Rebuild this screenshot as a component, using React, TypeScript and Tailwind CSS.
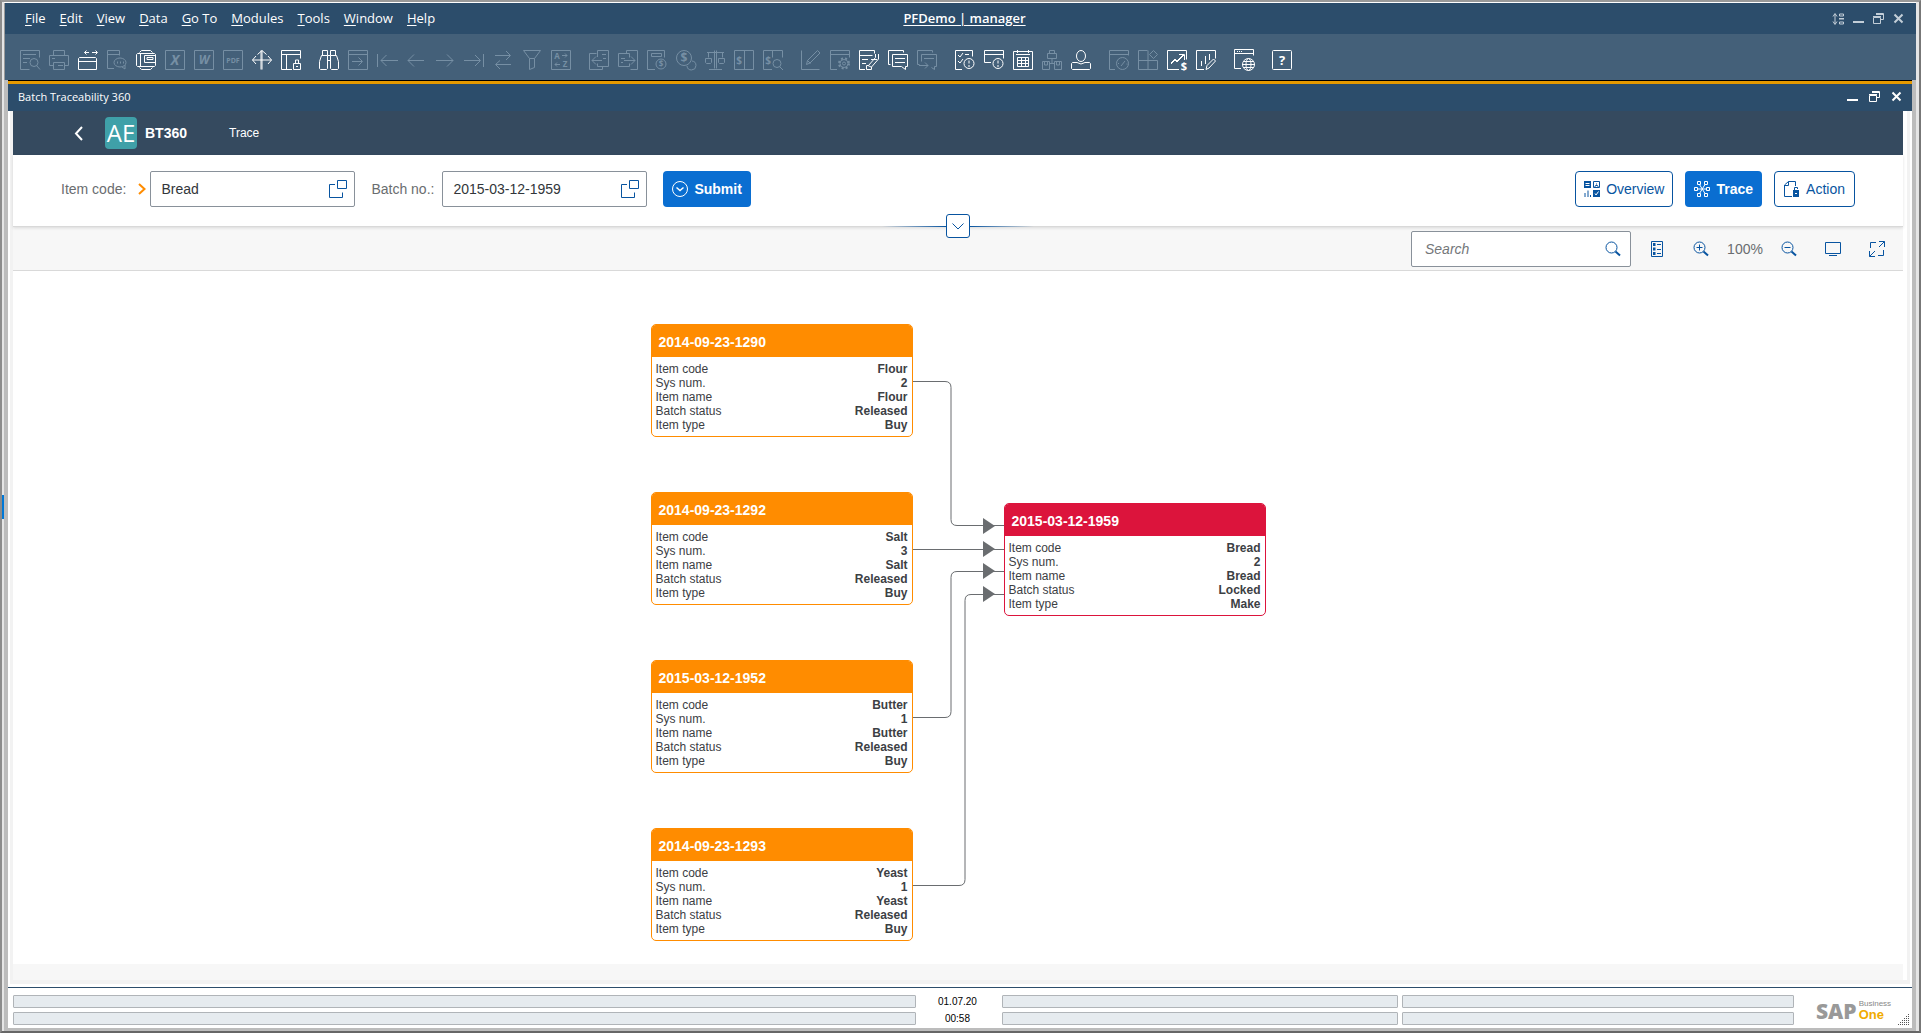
import { useState, type ReactNode } from "react";

const MENU = ["File", "Edit", "View", "Data", "Go To", "Modules", "Tools", "Window", "Help"];

const FIELDS = ["Item code", "Sys num.", "Item name", "Batch status", "Item type"];

type Batch = {
  id: string;
  values: string[];
  locked?: boolean;
  place: string;
};

const BATCHES: Batch[] = [
  { id: "2014-09-23-1290", values: ["Flour", "2", "Flour", "Released", "Buy"], place: "left-0 top-0" },
  { id: "2014-09-23-1292", values: ["Salt", "3", "Salt", "Released", "Buy"], place: "left-0 top-[168px]" },
  { id: "2015-03-12-1952", values: ["Butter", "1", "Butter", "Released", "Buy"], place: "left-0 top-[336px]" },
  { id: "2014-09-23-1293", values: ["Yeast", "1", "Yeast", "Released", "Buy"], place: "left-0 top-[504px]" },
  {
    id: "2015-03-12-1959",
    values: ["Bread", "2", "Bread", "Locked", "Make"],
    locked: true,
    place: "left-[353px] top-[179px]",
  },
];

type Tool = { label: string; on?: boolean; d?: string; extra?: ReactNode };

const glyph = (x: number, y: number, size: number, text: string, italic = false) => (
  <text
    x={x}
    y={y}
    fontSize={size}
    fontWeight="bold"
    fontStyle={italic ? "italic" : undefined}
    textAnchor="middle"
    fill="currentColor"
    stroke="none"
  >
    {text}
  </text>
);

const BOX = "M.5 .5h19v19H.5z";

const TOOL_GROUPS: Tool[][] = [
  [
    {
      label: "Preview",
      d: "M9.500 19.500H.5V.5h19v7M3 4.500h13M3 8.500h7M3 12.500h4M17 16l3 3.500",
      extra: <circle cx="14" cy="12.500" r="4" />,
    },
    { label: "Print", d: "M4.500 5.500v-5h11v5M4 15.500H.5v-10h19v10H16M4.500 12.500h11v7h-11zM3 8.500h3M9 15.500h5" },
    {
      label: "Window size",
      on: true,
      d: "M1.500 7.500h16l1 1v11H.5v-11zM.5 11.500h18M6.500 2.500H11M8.500 .5l-2 2 2 2M14 2.500h5M17.500 .5l2 2-2 2",
    },
    {
      label: "Messages",
      d: "M7 18.500H.5V.5h12v5M.5 4.500h12M15 17l3 2v-4",
      extra: (
        <>
          <ellipse cx="13" cy="12.500" rx="6" ry="4.500" />
          <path d="M10 12.500h1M13 12.500h1M16 12.500h1" strokeWidth="2" />
        </>
      ),
    },
    {
      label: "Fax",
      on: true,
      d: "M3.500 2.500l2-2h9l2 2M3.500 17.500l2 2h9l2-2M1.500 3.500h17l1 1v11l-1 1h-17l-1-1v-11zM4.500 3.500v13M8.500 5.500h11v7h-11zM11 7.500h6v2h-6z",
    },
    { label: "Export to Excel", d: BOX, extra: glyph(10, 15, 14, "X", true) },
    { label: "Export to Word", d: BOX, extra: glyph(10, 14, 12, "W", true) },
    { label: "Export to PDF", d: BOX, extra: glyph(10, 13, 7, "PDF") },
    {
      label: "Move",
      on: true,
      d: "M10 .5v19M.5 10h19M5.500 4.500L10 .5l4.500 4M4 6L.5 10 4 14M16 6l3.500 4-3.500 4M9 .5v19",
    },
    {
      label: "Lock layout",
      on: true,
      d: "M11 19.500H.5V.5h19v8M.5 4.500h19M5.500 4.500v15M12.500 13.500h7v6h-7zM14.500 13v-3h3v3M15 16.500h2",
    },
  ],
  [
    {
      label: "Find",
      on: true,
      d: "M3.500 5.500v-5h5v5M11.500 5.500v-5h5v5M8.500 5.500h3M2.500 5.500h6v13l-1 1h-6l-1-1v-7zM17.500 5.500h-6v13l1 1h6l1-1v-7zM8.500 10.500h3",
    },
    { label: "Add", d: "M.5 .5h19v19H.5zM.5 4.500h19M4 11.500h10M10.500 7.500l4 4-4 4" },
    { label: "First record", d: "M.5 4v13M4 10.500h17M9.500 5L4 10.500 9.500 16" },
    { label: "Previous record", d: "M2 10.500h16M8 4.500l-6 6 6 6" },
    { label: "Next record", d: "M1 10.500h17M12 4.500l6 6-6 6" },
    { label: "Last record", d: "M0 10.500h16M11 5l5.500 5.500L11 16M19.500 4v13" },
    { label: "Refresh", d: "M2 5.500h15M13 1l4.500 4.500L13 10M18 14.500H3M7 10.500l-4.500 4L7 19" },
    { label: "Filter", d: "M1.500 .5h17L12.500 8.500v9l-5 2v-11zM7.500 8.500h5" },
    {
      label: "Sort",
      d: "M.5 .5h19v19H.5zM11 5.500h5M14 3.500l2 2-2 2M9 14.500H4M6 12.500l-2 2 2 2",
      extra: (
        <>
          {glyph(6, 9, 8, "A")}
          {glyph(14, 17, 8, "Z")}
        </>
      ),
    },
  ],
  [
    { label: "Base document", d: "M7.500 3.500h-7v16h13v-3M8.500 .5h11v16h-11v-3M8.500 7V.5M13 4.500h4M14 8.500h3M3 10.500h10M7 6.500l-4 4 4 4" },
    { label: "Target document", d: "M8.500 3.500V.5h11v19h-7M.5 3.500h11v4M.5 3.500v13h11v-3M3 8.500h4M3 12.500h2M6 10.500h11M13 6.500l4 4-4 4" },
    {
      label: "Gross profit",
      d: "M8 19.500H.5V.5h17v7M4.500 3.500h10v3h-10z",
      extra: (
        <>
          <circle cx="14" cy="14" r="5" />
          {glyph(14, 17, 8, "$")}
        </>
      ),
    },
    {
      label: "Payment means",
      extra: (
        <>
          <circle cx="8" cy="8" r="7.500" />
          {glyph(8, 12, 12, "$")}
          <path d="M11 16a4.500 4.500 0 1 0 5-5" />
        </>
      ),
    },
    { label: "Volume and weight", d: "M9.500 .5v18M11.500 .5v18M4 19.500h13M2 2.500h17M3.500 2.500v5M17.500 2.500v5M.5 8.500h6v4l-1 1h-4l-1-1zM13.500 8.500h6v4l-1 1h-4l-1-1z" },
    { label: "Journal", d: "M.5 .5h19v19H.5zM10.500 .5v19", extra: glyph(5, 14, 10, "$") },
    {
      label: "Journal preview",
      d: "M9 19.500H.5V.5h19v7M9.500 .5v7M17 17l3 3",
      extra: (
        <>
          {glyph(5, 14, 10, "$")}
          <circle cx="14" cy="13.500" r="4" />
        </>
      ),
    },
  ],
  [
    { label: "Edit", d: "M.5 .5v19h18M5.500 14.500l1-4 10-10 2.500 2.500-10 10zM6.500 10.500l3 3" },
    {
      label: "Form settings",
      d: "M7 19.500H.5V.5h19v7M.5 4.500h19",
      extra: (
        <>
          <circle cx="14" cy="13.500" r="5" strokeWidth="2" strokeDasharray="2 2" />
          <circle cx="14" cy="13.500" r="4" />
          <circle cx="14" cy="13.500" r="1.500" />
        </>
      ),
    },
    {
      label: "Layout designer",
      on: true,
      d: "M6 19.500H.5V.5h15v3M.5 5.500h13M3 9.500h6M3 13.500h4M19.500 4v5l-7 8v2.500h-5v-4h2l7-8V4M12 9.500h6M9 15.500l4 2",
    },
    { label: "Comments", on: true, d: "M2.500 14.500h-2V.5h15v2M4.500 4.500h15v12h-2v3l-4-3h-9zM7 8.500h10M7 12.500h10" },
    { label: "Forward message", d: "M2.500 14.500h-2V.5h15v2M4.500 11.500v-7h15v12h-2v3l-3-2M7 8.500h10M2 15.500h9M8 12.500l3 3-3 3" },
  ],
  [
    {
      label: "Checklist alerts",
      on: true,
      d: "M7 19.500H.5V.5h17v6M3 5l2 2 3-4M3 11l2 2 3-4M10 4.500h4M14 10.500v3M14 15v2",
      extra: <circle cx="14" cy="13.500" r="5" />,
    },
    {
      label: "Window alerts",
      on: true,
      d: "M7 12.500H.5V.5h19v8M.5 4.500h19M14 10.500v3M14 15v2",
      extra: <circle cx="14" cy="13.500" r="5" />,
    },
    {
      label: "Calendar",
      on: true,
      d: "M.5 1.500h19v18H.5zM3 4.500h14M4.500 0v3M15.500 0v3M4.500 7.500h11v9h-11zM4.500 10.500h11M4.500 13.500h11M8.500 7v10M12.500 7v10",
    },
    { label: "Relationship map", d: "M5.500 8.500v-5h9v5h-9M7.500 3.500v-3h5v3M.5 11.500h7v8h-7zM12.500 11.500h7v8h-7zM10 8.500v5h2M10 13.500H8M2.500 11v4h3v-4M14.500 11v4h3v-4" },
    {
      label: "Approvals",
      on: true,
      d: "M6 12.500H1.500l-1 1v5l1 1h17l1-1v-5l-1-1H14q-4 3-8 0",
      extra: <ellipse cx="10" cy="6" rx="4.500" ry="5.500" />,
    },
  ],
  [
    {
      label: "Dashboard",
      d: "M6 19.500H.5V.5h19v5M.5 4.500h19M12 16l4-5M9 13.500h1M17.500 14h1",
      extra: <circle cx="13.500" cy="13.500" r="6" />,
    },
    { label: "Widgets", d: "M9.500 .5h-9v19h19v-9H.5M10 .5v19M15.500 .5l4 4-4 4-4-4z" },
    {
      label: "Sales forecast",
      on: true,
      d: "M12 19.500H.5V.5h19v9M4 14l4-4 2 2 7-7M12 4.500h5.500V10M4 13l4-4 2 2 6-6",
      extra: glyph(17, 20, 11, "$"),
    },
    { label: "Report editor", on: true, d: "M8 19.500H.5V.5h19v8M5.500 11v5M9.500 6v8M13.500 4v6M10 19.500l1-4 6.500-6.500 2 2-6.500 7z" },
  ],
  [
    {
      label: "Web client",
      on: true,
      d: "M7 18.500H.5V-.5h19v6M.5 3.500h19M3 1.500h1M5 1.500h1M7 1.500h1M8 14.500h13M9.500 11.500h10M9.500 17.500h10",
      extra: (
        <>
          <circle cx="14.500" cy="14.500" r="6" />
          <ellipse cx="14.500" cy="14.500" rx="2.500" ry="6" />
        </>
      ),
    },
  ],
  [{ label: "Help", on: true, extra: <><rect x=".5" y=".5" width="19" height="19" rx="1" />{glyph(10, 15, 13, "?")}</> }],
];

function Icon({ d, size = 16, children }: { d?: string; size?: number; children?: ReactNode }) {
  return (
    <svg
      width={size}
      height={size}
      viewBox={`0 0 ${size} ${size}`}
      fill="none"
      stroke="currentColor"
      className="shrink-0 overflow-visible"
      aria-hidden="true"
    >
      {d && <path d={d} />}
      {children}
    </svg>
  );
}

function WindowButtons() {
  return (
    <>
      <button aria-label="Minimize">
        <Icon size={11} d="M0 9.500h11M0 8.500h11" />
      </button>
      <button aria-label="Restore">
        <Icon size={11} d="M.5 4.500h7v6h-7zM0 3.500h8M3 1.500h8M3 .5h7.500v6H8" />
      </button>
      <button aria-label="Close">
        <Icon size={11}>
          <path d="M1.500 1.500l8 8M9.500 1.500l-8 8" strokeWidth="2" />
        </Icon>
      </button>
    </>
  );
}

function ValueInput({ id, value }: { id: string; value: string }) {
  const [text, setText] = useState(value);
  return (
    <div className="flex h-9 w-[205px] items-center rounded-xs border border-[#89919a] bg-white pr-[7px]">
      <input
        id={id}
        value={text}
        onChange={(e) => setText(e.target.value)}
        className="h-full min-w-0 flex-1 pl-2.5 text-sm text-[#32363a] outline-none"
      />
      <button className="text-[#0854a0]" aria-label="Value help">
        <Icon size={18} d="M6 4.500H.5v13h13v-5M8.500 .5h9v8h-9z" />
      </button>
    </div>
  );
}

function BatchCard({ batch }: { batch: Batch }) {
  return (
    <article
      className={`absolute w-[262px] overflow-hidden rounded-[5px] border bg-white ${batch.place} ${
        batch.locked ? "border-[#dc143c]" : "border-[#ff8c00]"
      }`}
    >
      <h3
        className={`flex h-8 items-center px-[7px] pt-0.5 text-sm font-bold text-white ${
          batch.locked ? "bg-[#dc143c]" : "bg-[#ff8c00]"
        }`}
      >
        {batch.id}
      </h3>
      <dl className="px-1 pt-[5px] pb-1 text-xs leading-[14px] text-[#3c4044]">
        {FIELDS.map((field, i) => (
          <div key={field} className="flex justify-between">
            <dt>{field}</dt>
            <dd className="font-bold">{batch.values[i]}</dd>
          </div>
        ))}
      </dl>
    </article>
  );
}

function TraceGraph() {
  return (
    <div className="relative h-[617px] w-[615px]">
      <svg className="absolute inset-0" width="615" height="617" fill="none" stroke="#6a6d70" aria-hidden="true">
        <path d="M262 57.500h32q6 0 6 6v132q0 6 6 6h47" />
        <path d="M262 225.500h91" />
        <path d="M262 393.500h32q6 0 6-6v-134q0-6 6-6h47" />
        <path d="M262 561.500h46q6 0 6-6V276.500q0-6 6-6h33" />
        {[202, 225, 247, 270].map((y) => (
          <path key={y} d={`M332 ${y - 8}v16l12-8z`} fill="#6a6d70" stroke="none" />
        ))}
      </svg>
      {BATCHES.map((batch) => (
        <BatchCard key={batch.id} batch={batch} />
      ))}
    </div>
  );
}

function GraphToolbar() {
  const tool = "flex size-9 items-center justify-center text-[#0854a0]";
  return (
    <div className="flex h-11 items-center justify-end gap-2 border-b border-[#d9d9d9] bg-[#f7f7f7] pr-2">
      <div className="flex h-9 w-[220px] items-center rounded-xs border border-[#89919a] bg-white pr-[9px]">
        <input
          aria-label="Search"
          placeholder="Search"
          className="h-full min-w-0 flex-1 pl-[13px] text-sm outline-none placeholder:text-[#74777a] placeholder:italic"
        />
        <button className="text-[#0854a0]" aria-label="Run search">
          <Icon>
            <circle cx="6.500" cy="6.500" r="5.500" />
            <path d="M10.500 10.500l4.500 4" strokeWidth="2" />
          </Icon>
        </button>
      </div>
      <button className={tool} aria-label="Legend">
        <Icon d="M2.500 .5h11v15h-11zM8 3.500h4M8 8.500h4M8 12.500h4">
          <path d="M4 3.500h2.500M4 8h2.500M4 12.500h2.500" strokeWidth="3" />
        </Icon>
      </button>
      <button className={tool} aria-label="Zoom in">
        <Icon d="M3.500 6.500h6M6.500 3.500v6">
          <circle cx="6.500" cy="6.500" r="5.500" />
          <path d="M10.500 10.500l4.500 4" strokeWidth="2" />
        </Icon>
      </button>
      <span className="w-9 text-center text-sm text-[#6a6d70]">100%</span>
      <button className={tool} aria-label="Zoom out">
        <Icon d="M3.500 6.500h6">
          <circle cx="6.500" cy="6.500" r="5.500" />
          <path d="M10.500 10.500l4.500 4" strokeWidth="2" />
        </Icon>
      </button>
      <button className={tool} aria-label="Fit to screen">
        <Icon d="M.5 1.500h15v11H.5zM4 14.500h8" />
      </button>
      <button className={tool} aria-label="Full screen">
        <Icon d="M7 1.500H1.500V7M9 14.500h5.500V9M10 .5h5.500V6M15.500 .5L10 6M.5 10v5.500H6M.5 15.500L6 10" />
      </button>
    </div>
  );
}

function FilterBar() {
  return (
    <div className="relative flex h-[72px] items-center justify-between border-b border-[#d9d9d9] bg-white px-12 pb-[3px] shadow-[0_1px_3px_rgba(0,0,0,0.12)]">
      <form className="flex items-center" onSubmit={(e) => e.preventDefault()}>
        <label htmlFor="item-code" className="mr-3 text-sm text-[#6a6d70]">
          Item code:
        </label>
        <span className="mr-1 text-[#ff8c00]">
          <Icon size={8}>
            <path d="M1 -1l5.500 5L1 9" strokeWidth="2" />
          </Icon>
        </span>
        <ValueInput id="item-code" value="Bread" />
        <label htmlFor="batch-no" className="mr-2 ml-4 text-sm text-[#6a6d70]">
          Batch no.:
        </label>
        <ValueInput id="batch-no" value="2015-03-12-1959" />
        <button
          type="submit"
          className="ml-4 flex h-9 items-center gap-1.5 rounded-sm bg-[#0a6ed1] px-[9px] text-sm font-bold text-white"
        >
          <Icon>
            <circle cx="8" cy="8" r="7.500" />
            <path d="M4.500 6.500L8 9.500l3.500-3" strokeWidth="1.500" />
          </Icon>
          Submit
        </button>
      </form>

      <div className="flex gap-3 text-sm">
        <button className="flex h-9 items-center gap-1.5 rounded-sm border border-[#0854a0] bg-white px-2 text-[#0854a0]">
          <Icon>
            <path d="M0 0h7v7H0zM9 9h7v7H9z" fill="currentColor" stroke="none" />
            <path d="M9.500 .5h6v6h-6zM10.500 6.500l1-2h2l1 2M12 3h1M1 12v4M4 9.500V16M6.500 14v2" />
            <path d="M1.500 2.500h4M1.500 4.500h4M11 12.500l1 1.500 2.500-3.500" stroke="#fff" />
          </Icon>
          Overview
        </button>
        <button className="flex h-9 items-center gap-1.5 rounded-sm bg-[#0a6ed1] px-[9px] font-bold text-white">
          <Icon d="M3.500 .5h3v3h-3zM10.500 .5h3v3h-3zM.5 6.500h3v3h-3zM12.500 6.500h3v3h-3zM3.500 12.500h3v3h-3zM10.500 12.500h3v3h-3zM4 8h8.500M5.500 3.500l5.500 9M11 3.500l-5.500 9" />
          Trace
        </button>
        <button className="flex h-9 items-center gap-1.5 rounded-sm border border-[#0854a0] bg-white px-[9px] text-[#0854a0]">
          <Icon d="M8 15.500H.5V4l4-3.500h7V5M.5 4.500h4v-4M10.500 9V6.500h3V8">
            <path d="M9 9h6v7H9z" fill="currentColor" stroke="none" />
            <path d="M11 12.500h2" stroke="#fff" />
          </Icon>
          Action
        </button>
      </div>

      {/* collapse handle straddles the lower edge of the bar */}
      <div className="absolute inset-x-0 -bottom-3 z-10 flex items-center justify-center">
        <span className="h-px w-16 bg-linear-to-l from-[#0854a0] to-transparent" />
        <button
          className="flex size-6 items-center justify-center rounded-[3px] border border-[#0854a0] bg-white text-[#0854a0]"
          aria-label="Expand header"
        >
          <Icon size={12} d="M.5 3.500L6 9l5.500-5.500" />
        </button>
        <span className="h-px w-16 bg-linear-to-r from-[#0854a0] to-transparent" />
      </div>
    </div>
  );
}

function StatusCell() {
  return <div className="h-[13px] rounded-[1px] border border-[#b0b4b8] bg-[#e6ebef]" />;
}

function StatusBar() {
  return (
    <footer className="relative flex items-start border-t border-[#2c4d6b] bg-white pt-[7px] pr-5 pb-[3px] pl-[5px]">
      <div className="grid flex-1 grid-cols-[904fr_86fr_396fr_396fr] gap-y-1">
        {["01.07.20", "00:58"].map((text) => (
          <div key={text} className="contents">
            <StatusCell />
            <span className="pr-1 text-center text-[10px] leading-[13px] text-black">{text}</span>
            <StatusCell />
            <div className="pl-1">
              <StatusCell />
            </div>
          </div>
        ))}
      </div>
      <div className="ml-[22px] flex w-[76px] items-center gap-0.5 pt-1">
        <span className="font-['Open_Sans','Noto_Sans',sans-serif] text-[21px] leading-[20px] font-extrabold text-[#999]">
          SAP
        </span>
        <span className="flex flex-col">
          <span className="text-[8px] leading-[9px] text-[#888]">Business</span>
          <span className="text-[13px] leading-[14px] font-bold text-[#f0ab00]">One</span>
        </span>
      </div>
      <svg className="absolute right-0.5 bottom-0.5" width="12" height="12" stroke="#555" strokeDasharray="1 1" aria-hidden="true">
        <path d="M10 .5h2M8 2.500h4M6 4.500h6M4 6.500h8M2 8.500h10M0 10.500h12" />
      </svg>
    </footer>
  );
}

export default function App() {
  return (
    <div className="relative flex min-h-screen flex-col border-2 border-t-[#999] border-r-[#777] border-b-[#666] border-l-[#8c8c8c] bg-white font-['Liberation_Sans',Arial,sans-serif]">
      <span className="absolute top-[493px] left-0 z-10 h-6 w-0.5 bg-[#0078d7]" />
      <div className="flex flex-1 flex-col border-r-3 border-l-2 border-[#e5e5e5] pt-px">
        <header className="border-l border-[#999] font-['Open_Sans','Noto_Sans',sans-serif] text-white">
          <div className="grid h-[31px] grid-cols-[1fr_auto_1fr] items-center bg-[#2c4d6b] pr-3 pl-5">
            <nav className="flex gap-3.5 text-[13px]">
              {MENU.map((item) => (
                <button key={item}>
                  <span className="underline underline-offset-2">{item[0]}</span>
                  {item.slice(1)}
                </button>
              ))}
            </nav>
            <h1 className="text-[13px] font-semibold underline underline-offset-2">PFDemo | manager</h1>
            <div className="flex items-center justify-end gap-[9px] text-[#c3ced8]">
              <button aria-label="Arrange windows">
                <Icon size={12} d="M3 1v10M1 3.500l2-3 2 3M1 8.500l2 3 2-3M7.500 1h4v2h-4zM7 6h5M7 5.500h5M7.500 9h4v2h-4z" />
              </button>
              <WindowButtons />
            </div>
          </div>

          <div className="flex h-[46px] gap-[18px] bg-[#446079] pt-4 pl-[15px]">
            {TOOL_GROUPS.map((group) => (
              <div key={group[0].label} className="flex gap-[9px]">
                {group.map((tool) => (
                  <button
                    key={tool.label}
                    aria-label={tool.label}
                    className={`size-5 ${tool.on ? "text-white" : "text-[#768fa4]"}`}
                  >
                    <Icon size={20} d={tool.d}>
                      {tool.extra}
                    </Icon>
                  </button>
                ))}
              </div>
            ))}
          </div>
        </header>

        <main className="flex flex-1 flex-col border-r-4 border-b-3 border-l-4 border-[#bcbcbc]">
          <div className="flex h-[31px] items-center justify-between border-t border-black bg-[#2c4d6b] px-2.5 font-['Open_Sans','Noto_Sans',sans-serif] text-white shadow-[inset_0_3px_0_#e69a00]">
            <h2 className="pt-0.5 text-[11px]">Batch Traceability 360</h2>
            <div className="flex gap-[11px]">
              <WindowButtons />
            </div>
          </div>

          <section className="flex flex-1 flex-col border-x-2 border-white">
            <div className="flex flex-1 flex-col border-x-3 border-b-4 border-[#f2f2f2]">
              <div className="flex flex-1 flex-col bg-white pr-1">
                <div className="flex h-11 items-center bg-[#354a5f] pl-[60px] text-white">
                  <button className="mr-5" aria-label="Back">
                    <Icon size={12}>
                      <path d="M9 0L3 6.500 9 13" strokeWidth="2" />
                    </Icon>
                  </button>
                  <span className="flex size-8 items-center justify-center rounded-sm bg-[#3fa0a8] font-['Open_Sans','Noto_Sans',sans-serif] text-2xl">
                    AE
                  </span>
                  <strong className="ml-2 text-sm">BT360</strong>
                  <a href="#trace" className="ml-[42px] text-xs">
                    Trace
                  </a>
                </div>
                <FilterBar />
                <GraphToolbar />
                <div className="flex flex-1 justify-center bg-white pt-[53px]">
                  <TraceGraph />
                </div>
                <div className="h-4 bg-[#f7f7f7]" />
              </div>
            </div>
          </section>

          <div className="h-[3px] bg-white" />
          <StatusBar />
        </main>
      </div>
    </div>
  );
}
